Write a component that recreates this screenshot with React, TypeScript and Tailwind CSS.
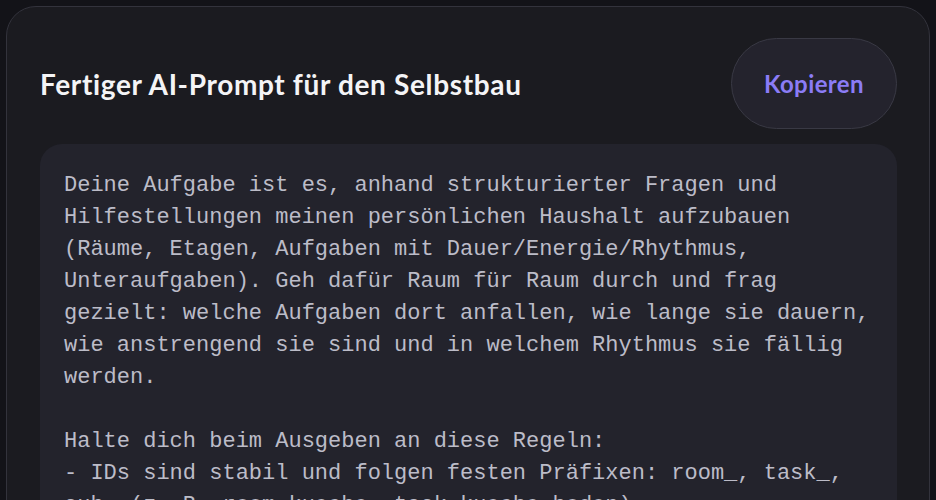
const promptLines = [
  'Deine Aufgabe ist es, anhand strukturierter Fragen und',
  'Hilfestellungen meinen persönlichen Haushalt aufzubauen',
  '(Räume, Etagen, Aufgaben mit Dauer/Energie/Rhythmus,',
  'Unteraufgaben). Geh dafür Raum für Raum durch und frag',
  'gezielt: welche Aufgaben dort anfallen, wie lange sie dauern,',
  'wie anstrengend sie sind und in welchem Rhythmus sie fällig',
  'werden.',
  '',
  'Halte dich beim Ausgeben an diese Regeln:',
  '- IDs sind stabil und folgen festen Präfixen: room_, task_,',
  'sub_ (z. B. room_kueche, task_kueche_boden).',
  '- Dauer in Minuten, Energie von 1 bis 5.',
  '- Rhythmus als Anzahl Tage.',
];

export default function App() {
  return (
    <div className="h-[500px] overflow-hidden bg-[#131318] px-[6px] pt-[6px]">
      <div className="rounded-[30px] border border-[#33333c] bg-[#1b1b20] pl-[33px] pr-[32px] pt-[31px] pb-10">
        <div className="flex items-center justify-between">
          <h2 className="font-['Lato',sans-serif] text-[28px] font-bold tracking-[0.65px] text-[#f4f4f6]">
            Fertiger AI-Prompt für den Selbstbau
          </h2>
          <button className="h-[91px] w-[166px] rounded-full border border-[#393944] bg-[#24232d] font-['Lato',sans-serif] text-[24px] font-bold tracking-[0.4px] text-[#8b7cf6]">
            Kopieren
          </button>
        </div>
        <pre className="mt-[15px] rounded-[22px] bg-[#23232c] px-6 pt-[26px] pb-6 font-['Liberation_Mono',monospace] text-[22px] leading-[32px] text-[#bcbcc8]">
          {promptLines.join('\n')}
        </pre>
      </div>
    </div>
  );
}
